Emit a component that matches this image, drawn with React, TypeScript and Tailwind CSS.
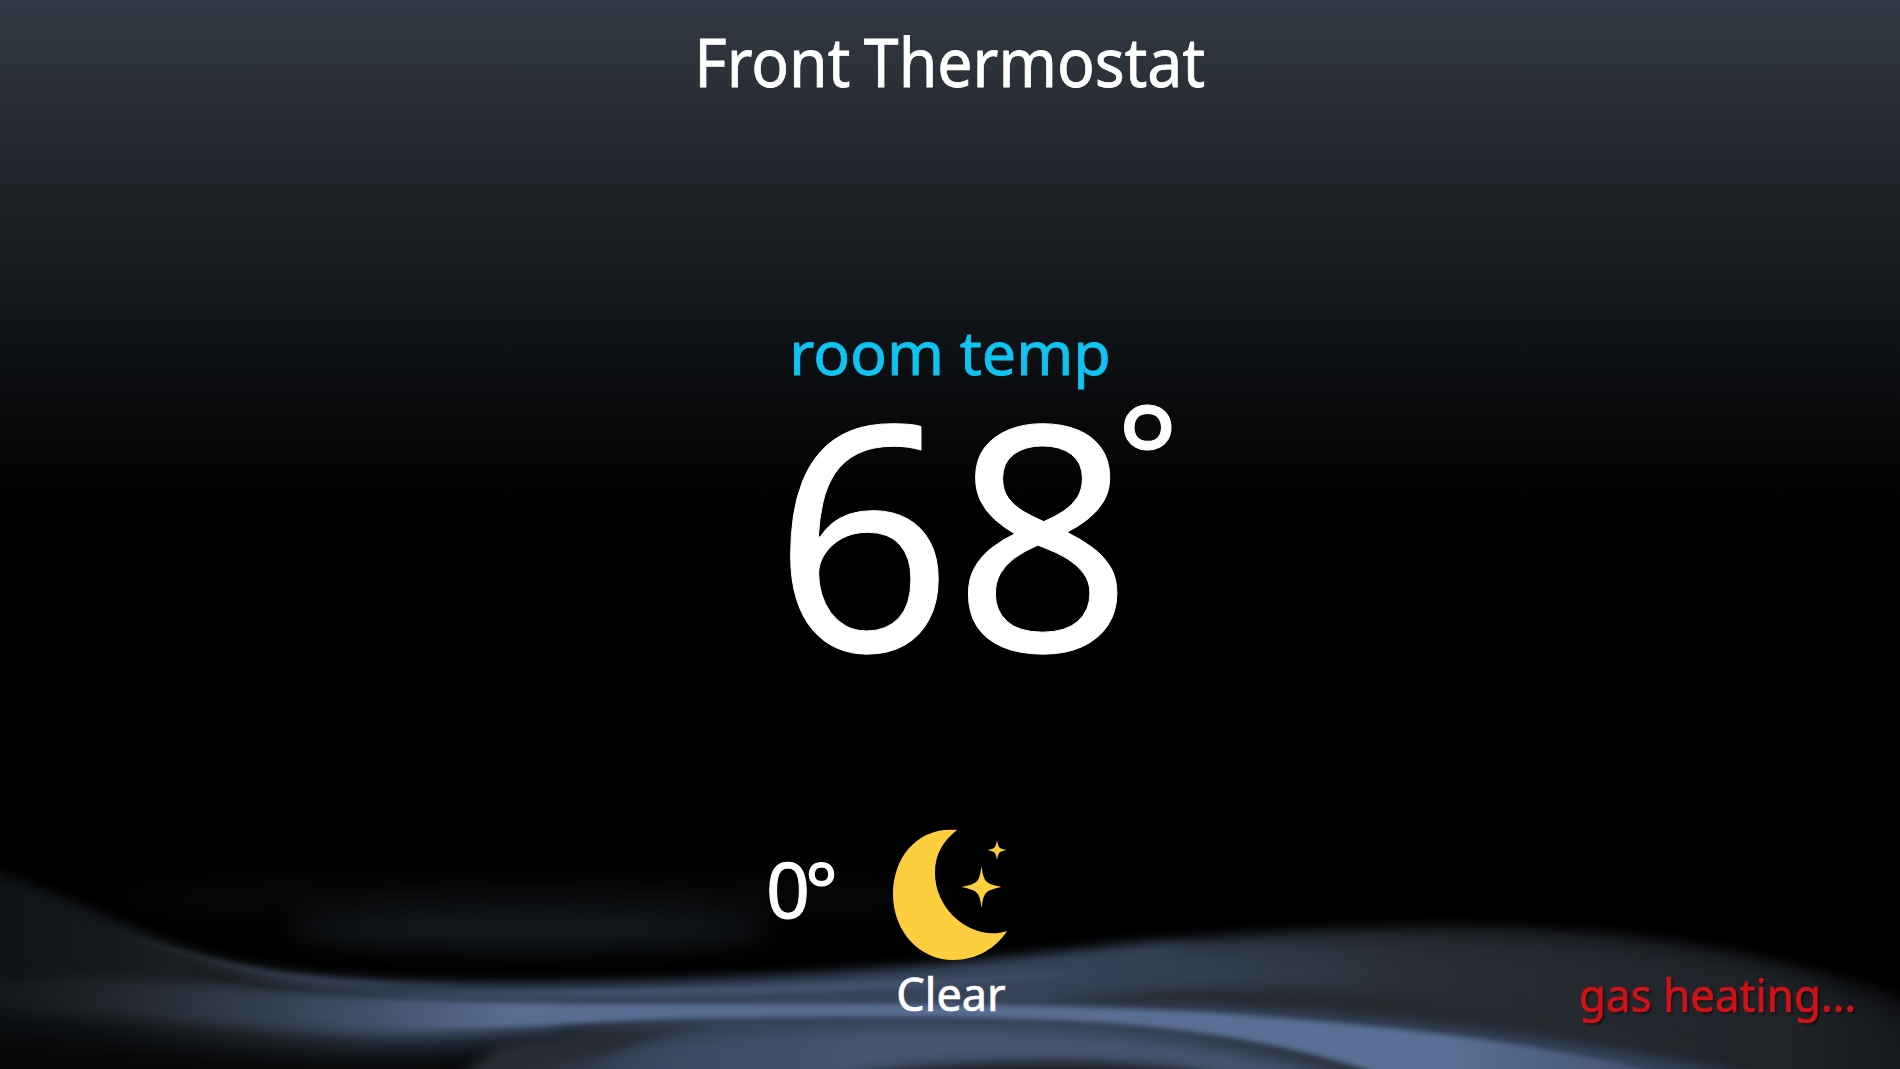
import React from 'react'

const reading = {
  name: 'Front Thermostat',
  label: 'room temp',
  temp: '68',
  outside: '0°',
  conditions: 'Clear',
  status: 'gas heating...',
}

const Waves = () => (
  <svg
    className="absolute bottom-0 left-0 h-[269px] w-full"
    viewBox="0 800 1900 269"
    preserveAspectRatio="none"
    aria-hidden="true"
  >
    <defs>
      <filter id="soft" x="-10%" y="-50%" width="120%" height="200%" colorInterpolationFilters="sRGB">
        <feGaussianBlur stdDeviation="2.5" />
      </filter>
      <filter id="blur" x="-10%" y="-50%" width="120%" height="200%" colorInterpolationFilters="sRGB">
        <feGaussianBlur stdDeviation="6" />
      </filter>
      <filter id="haze" x="-20%" y="-200%" width="140%" height="500%" colorInterpolationFilters="sRGB">
        <feGaussianBlur stdDeviation="14" />
      </filter>
      <linearGradient id="sheet" gradientUnits="userSpaceOnUse" x1="0" x2="1900" y1="0" y2="0">
        <stop offset="0" stopColor="#0f1317" />
        <stop offset="0.06" stopColor="#15191d" />
        <stop offset="0.13" stopColor="#22272d" />
        <stop offset="0.2" stopColor="#303b4b" />
        <stop offset="0.28" stopColor="#364459" />
        <stop offset="0.54" stopColor="#364459" />
        <stop offset="0.63" stopColor="#334051" />
        <stop offset="0.74" stopColor="#2a2f37" />
        <stop offset="0.85" stopColor="#23272e" />
        <stop offset="0.94" stopColor="#202429" />
        <stop offset="1" stopColor="#16191d" />
      </linearGradient>
      <linearGradient id="beam" gradientUnits="userSpaceOnUse" x1="0" x2="1900" y1="0" y2="0">
        <stop offset="0.13" stopColor="#33404f" stopOpacity="0" />
        <stop offset="0.2" stopColor="#44536e" stopOpacity="0.9" />
        <stop offset="0.27" stopColor="#596d93" />
        <stop offset="0.76" stopColor="#5a6f95" />
        <stop offset="0.84" stopColor="#4a5b7b" />
        <stop offset="0.9" stopColor="#344258" />
      </linearGradient>
      <linearGradient id="tail" gradientUnits="userSpaceOnUse" x1="0" x2="500" y1="0" y2="0">
        <stop offset="0" stopColor="#1b1f23" stopOpacity="0.4" />
        <stop offset="0.25" stopColor="#23272e" />
        <stop offset="0.5" stopColor="#323d4c" />
        <stop offset="0.8" stopColor="#44536e" />
        <stop offset="1" stopColor="#44536e" />
      </linearGradient>
      <linearGradient id="lower" gradientUnits="userSpaceOnUse" x1="480" x2="1400" y1="0" y2="0">
        <stop offset="0" stopColor="#2a313c" stopOpacity="0.2" />
        <stop offset="0.2" stopColor="#3a4860" />
        <stop offset="0.4" stopColor="#45546f" />
        <stop offset="1" stopColor="#45546f" />
      </linearGradient>
      <linearGradient id="streak" gradientUnits="userSpaceOnUse" x1="40" x2="520" y1="0" y2="0">
        <stop offset="0" stopColor="#262b32" stopOpacity="0" />
        <stop offset="0.3" stopColor="#262b32" />
        <stop offset="0.6" stopColor="#334052" />
        <stop offset="1" stopColor="#364459" stopOpacity="0" />
      </linearGradient>
      <linearGradient id="fold" gradientUnits="userSpaceOnUse" x1="380" x2="1150" y1="0" y2="0">
        <stop offset="0" stopColor="#45546f" stopOpacity="0" />
        <stop offset="0.3" stopColor="#45546f" />
        <stop offset="0.65" stopColor="#45546f" />
        <stop offset="1" stopColor="#45546f" stopOpacity="0" />
      </linearGradient>
    </defs>

    {/* Faint haze above the main sheet */}
    <ellipse cx="540" cy="898" rx="420" ry="18" fill="#0a0b0d" fillOpacity="0.8" filter="url(#haze)" />
    <ellipse cx="530" cy="928" rx="240" ry="20" fill="#151a1f" filter="url(#haze)" />

    {/* Main sheet */}
    <path
      d="M-40 862 C50 884 130 934 220 959 C310 980 410 983 520 983 C660 983 860 974 1010 957 C1160 941 1250 928 1430 926 C1600 924 1760 942 1940 1010 V1110 H-40Z"
      fill="url(#sheet)"
      filter="url(#blur)"
    />
    <path
      d="M1180 900 H1960 V1040 C1840 976 1700 940 1560 934 C1420 930 1300 930 1180 942Z"
      fill="#000"
      fillOpacity="0.6"
      filter="url(#haze)"
    />
    <path
      d="M40 904 C130 938 220 966 310 976 C380 983 460 986 520 986 V993 C430 991 330 990 270 978 C180 960 100 925 40 904Z"
      fill="url(#streak)"
      filter="url(#soft)"
    />
    <path d="M400 991 C600 993 860 986 1120 968 C1000 988 800 997 400 997Z" fill="url(#fold)" filter="url(#soft)" />
    <path
      d="M1040 1002 C1120 992 1210 985 1320 990 C1480 1000 1600 1022 1700 1050 C1500 1020 1250 1002 1040 1002Z"
      fill="#262a30"
      filter="url(#blur)"
    />

    {/* Shadow in the bottom left corner */}
    <path
      d="M-60 1026 C90 1032 220 1052 380 1049 C470 1046 540 1038 650 1030 C590 1054 530 1076 480 1120 H-60Z"
      fill="#050607"
      filter="url(#haze)"
    />
    <path d="M500 1046 C540 1038 620 1028 720 1022 C660 1036 600 1050 560 1090 H440Z" fill="#282d34" filter="url(#blur)" />

    {/* Lower band and the dark arc under it */}
    <path
      d="M480 1090 C580 1050 720 1032 900 1029 C1080 1028 1180 1036 1400 1090Z"
      fill="url(#lower)"
      filter="url(#blur)"
    />
    <path d="M780 1090 C890 1064 980 1061 1080 1062 C1180 1065 1230 1076 1270 1090Z" fill="#1b1d22" filter="url(#blur)" />

    {/* Bright beam with its wide, dim tail on the left */}
    <path
      d="M-20 986 C80 968 200 984 340 997 C400 1001 460 1004 560 1006 V1024 C500 1030 430 1036 360 1033 C240 1028 100 1015 -20 1008Z"
      fill="url(#tail)"
      filter="url(#blur)"
    />
    <path d="M190 966 C250 986 330 996 410 997 C350 998 260 988 190 974Z" fill="#191d21" filter="url(#soft)" />
    <path
      d="M1180 1010 C1350 1014 1560 1030 1790 1086 H1450 C1350 1050 1280 1030 1180 1020Z"
      fill="#344258"
      filter="url(#blur)"
    />
    <path
      d="M180 988 C250 992 320 997 400 1001 C520 1005 700 1004 850 1004 C1020 1005 1120 1007 1230 1014 C1430 1029 1560 1046 1710 1084 H1410 C1290 1042 1200 1030 1100 1022 C960 1014 800 1016 660 1019 C560 1024 470 1030 400 1027 C310 1020 250 1008 180 998Z"
      fill="url(#beam)"
      filter="url(#soft)"
    />
  </svg>
)

const ClearNight = () => (
  <svg className="h-[132px] w-[116px]" viewBox="0 0 116 132" fill="#fdce3e" aria-hidden="true">
    <path d="M65 1 C27 -3 1 27 1 65 C1 103 28 131 61 131 C85 131 104 119 115 102 C82 113 43 83 43 44 C43 25 51 12 65 1Z" />
    <path d="M89.500 37 Q91 50 94.500 52.500 Q97 55.500 109.500 58 Q97 60.500 94.500 63.500 Q91 66 89.500 79 Q88 66 84.500 63.500 Q82 60.500 69.500 58 Q82 55.500 84.500 52.500 Q88 50 89.500 37Z" />
    <path d="M105 11 Q106 17 107.500 18.500 Q109 20 115 21 Q109 22 107.500 23.500 Q106 25 105 31 Q104 25 102.500 23.500 Q101 22 95 21 Q101 20 102.500 18.500 Q104 17 105 11Z" />
  </svg>
)

const App = () => (
  <main className="relative flex h-[1069px] w-full flex-col items-center overflow-hidden bg-black bg-[linear-gradient(180deg,#2f3843_0px,#2d333b_60px,#23272e_145px,#1b1e22_235px,#101418_325px,#08090b_420px,#000_510px)] font-['Noto_Sans',sans-serif] text-white">
    <Waves />
    <h1 className="relative mt-[13px] h-24 origin-center scale-x-[0.92] text-[68px] leading-[96px] whitespace-nowrap [-webkit-text-stroke:0.8px_white] [word-spacing:-3px]">
      {reading.name}
    </h1>

    <section className="relative mt-[199px] flex flex-col items-center">
      <h2 className="h-[88px] text-[61px] leading-[88px] whitespace-nowrap text-[#10c3f0] [-webkit-text-stroke:0.8px_#10c3f0]">
        {reading.label}
      </h2>
      <div className="relative -mt-[17px] h-[300px] pl-1.5 text-[314px] leading-[300px] [-webkit-text-stroke:1px_white]">
        {reading.temp}
        <span className="absolute top-0 left-full -ml-4 text-[146px] leading-[152px]">°</span>
      </div>
    </section>

    <section className="relative mt-[150px] mr-[126px] flex w-[242px] items-start justify-between">
      <span className="pt-4 text-[77px] leading-[88px] tracking-[-5px] [-webkit-text-stroke:1px_white]">
        {reading.outside}
      </span>
      <div className="flex flex-col items-center">
        <ClearNight />
        <span className="pt-px pl-0.5 text-[45px] leading-[64px] [-webkit-text-stroke:0.7px_white]">
          {reading.conditions}
        </span>
      </div>
    </section>

    <p className="absolute right-[44px] bottom-[43px] origin-right scale-x-[0.965] text-[45.5px] leading-[64px] text-[#d01217] [-webkit-text-stroke:0.7px_#d01217] [text-shadow:2px_2px_2px_#0008]">
      {reading.status}
    </p>
  </main>
)
export default App
